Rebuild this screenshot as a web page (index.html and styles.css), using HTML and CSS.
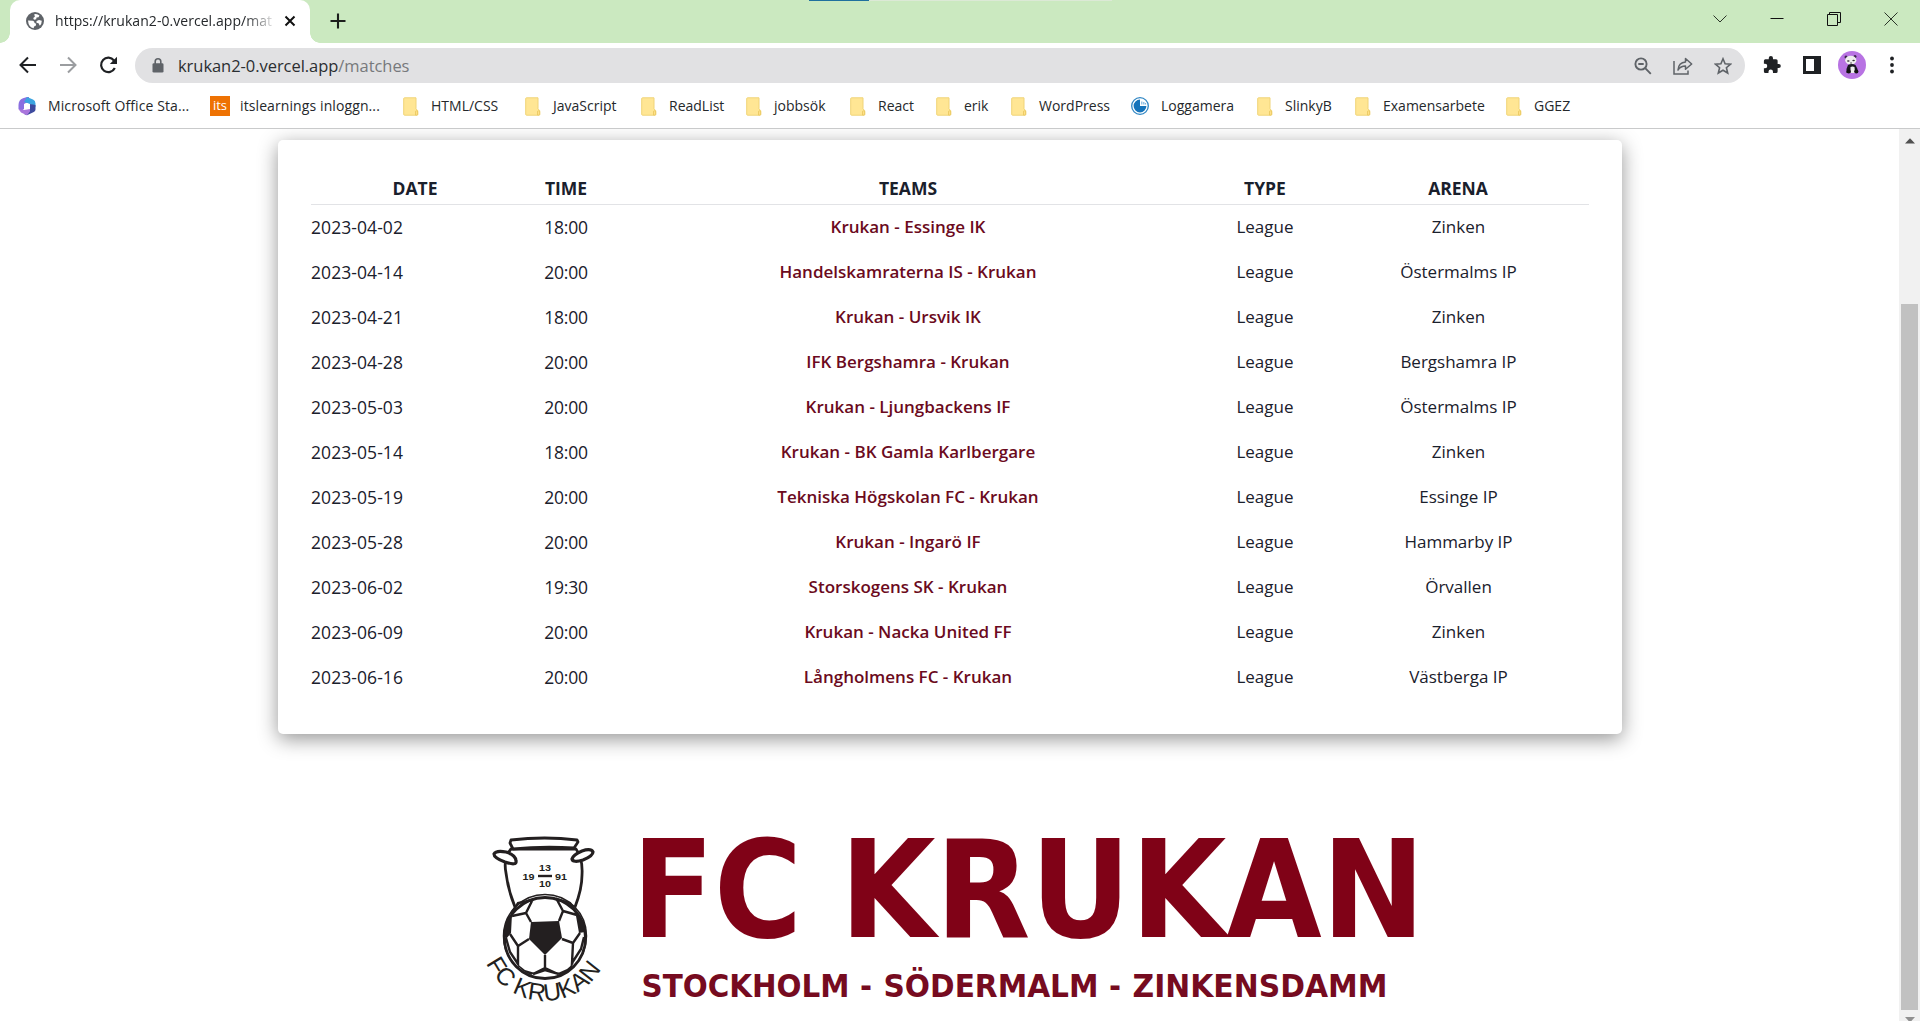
FILE: index.html
```html
<!DOCTYPE html>
<html lang="en">
<head>
<meta charset="utf-8">
<title>krukan2-0.vercel.app/matches</title>
<link rel="stylesheet" href="styles.css">
</head>
<body>
<svg width="0" height="0" class="defs">
  <symbol id="folder" viewBox="0 0 16 19"><path d="M1.500 .8h11.500v11l1.800 2v3.600q0 .8-.8.800H1.500q-.8 0-.8-.8V1.600q0-.8.800-.8z" fill="#ffe694" stroke="#f0d478"/><path d="M12.500 18v-3q0-1.300 1-1.300t1.100 1.300v2.300q0 .7-.8.700z" fill="#ffe08a" stroke="#e9c65c" stroke-width=".8"/></symbol>
</svg>
<div class="browser">
  <div class="tabstrip">
    <div class="tab">
      <svg width="18" height="18" viewBox="0 0 18 18"><circle cx="9" cy="9" r="9" fill="#5f6368"/><path d="M2 8.500l5 .3q1.800.7 1.500 2.200l1.700.8-.6 2.200-1.600.6-.3 1.700Q2.500 15.300 2 8.500zM8.200 2.200q3-.8 5.300 1.300l-1 1.800-2 .2-.3 1.700-2.200.6-.8-1.800 1.700-1.200zM10.500 9l2.500-1 2.800.7q0 3-2 5l-1.300-2.500-2-.4z" fill="#fff"/></svg>
      <span class="tab-title">https://krukan2-0.vercel.app/mat</span>
      <svg class="tab-close" width="12" height="12" viewBox="0 0 12 12"><path d="M1.500 1.500l9 9M10.500 1.500l-9 9" stroke="#111" stroke-width="2"/></svg>
    </div>
    <svg class="newtab" width="16" height="16" viewBox="0 0 16 16"><path d="M8 .5v15M.5 8h15" stroke="#1c1e1c" stroke-width="2.100"/></svg>
    <div class="loading"></div>
    <div class="window-buttons">
      <svg width="14" height="14" viewBox="0 0 14 14"><path d="M.5 3.500L7 10l6.500-6.500" fill="none" stroke="#2b3528"/></svg>
      <svg width="14" height="14" viewBox="0 0 14 14"><path d="M.5 6.500h13" stroke="#111"/></svg>
      <svg width="14" height="14" viewBox="0 0 14 14"><path d="M.5 2.500h10v11H.5zM2.500 2.500V.5h11v10h-3" fill="none" stroke="#111"/></svg>
      <svg width="14" height="14" viewBox="0 0 14 14"><path d="M.5.5l13 13M13.500.5l-13 13" stroke="#2b3528"/></svg>
    </div>
  </div>
  <div class="toolbar">
    <svg class="nav-back" width="18" height="18" viewBox="0 0 18 18"><path d="M17 9H2M9 1.500L1.500 9 9 16.500" fill="none" stroke="#1f2124" stroke-width="2"/></svg>
    <svg class="nav-fwd" width="18" height="18" viewBox="0 0 18 18"><path d="M1 9h15M9 1.500L16.500 9 9 16.500" fill="none" stroke="#9b9da0" stroke-width="2"/></svg>
    <svg class="nav-reload" width="19" height="18" viewBox="0 0 19 18"><path d="M15.800 12a7.200 7.200 0 1 1-.8-7.500" fill="none" stroke="#1f2124" stroke-width="2.200"/><path d="M18 .8v7.200h-7.200z" fill="#1f2124"/></svg>
    <div class="omnibox">
      <svg width="12" height="15" viewBox="0 0 12 15"><path d="M3.200 6V3.600a2.800 2.800 0 0 1 5.600 0V6" fill="none" stroke="#5f6368" stroke-width="1.600"/><rect x=".5" y="5.300" width="11" height="9.200" rx="1.300" fill="#5f6368"/></svg>
      <span class="url">krukan2-0.vercel.app<i>/matches</i></span>
      <svg class="zoom-icon" width="18" height="18" viewBox="0 0 18 18" fill="none" stroke="#5f6368" stroke-width="1.900"><circle cx="7" cy="7" r="5.600"/><path d="M11.200 11.200l5.600 5.600M4.300 7h5.400"/></svg>
      <svg class="share-icon" width="20" height="18" viewBox="0 0 20 18" fill="none" stroke="#5f6368" stroke-width="1.500"><path d="M1 4v13h14v-3.500"/><path d="M5 13q.5-7.500 7.500-8V1.500L18.700 7l-6.200 5.300V9q-5 0-7.500 4z" stroke-linejoin="round"/></svg>
      <svg width="18" height="18" viewBox="0 0 18 18"><path d="M9 1.800l2.100 4.900 5.400.5-4.100 3.500 1.300 5.300L9 13.200 4.300 16l1.300-5.300L1.500 7.200l5.400-.5z" fill="none" stroke="#5f6368" stroke-width="1.600"/></svg>
    </div>
    <svg class="ext" width="18" height="18" viewBox="0 0 24 24"><path d="M21 10.500h-1.500V6.200q0-2-2-2h-4.200V2.800a2.800 2.800 0 0 0-5.600 0v1.400H3.200q-2 0-2 2v4h1.500a3 3 0 0 1 0 6H1.200v4.300q0 2 2 2h4.100V21a3 3 0 0 1 6 0v1.500h4.200q2 0 2-2V16H21a2.750 2.750 0 0 0 0-5.500z" fill="#1f2124"/></svg>
    <svg class="panel" width="18" height="18" viewBox="0 0 18 18"><path d="M0 0h18v18H0zM3 3v12h8V3z" fill="#1f2124" fill-rule="evenodd"/></svg>
    <svg class="avatar" width="28" height="28" viewBox="0 0 28 28"><circle cx="14" cy="14" r="14" fill="#b873e3"/><circle cx="8" cy="6" r="1.500" fill="#39254a"/><circle cx="17" cy="5.500" r="1.500" fill="#39254a"/><ellipse cx="12.800" cy="9.200" rx="5.600" ry="4.400" fill="#eee"/><ellipse cx="10.300" cy="10" rx="1.300" ry=".8" fill="#333"/><ellipse cx="15.600" cy="9.500" rx="1.300" ry=".8" fill="#333"/><path d="M12.300 12h1.500" stroke="#333"/><path d="M10 14q4-2 7.500 0l2 4v4h-11v-4z" fill="#191820"/><path d="M12.500 16q2-1 4 0l.5 6h-4.500z" fill="#eee"/><circle cx="10.700" cy="20.500" r="2.100" fill="#111"/><circle cx="18.300" cy="20.500" r="2.100" fill="#111"/></svg>
    <svg class="more" width="4" height="18" viewBox="0 0 4 18" fill="#1f2124"><circle cx="2" cy="2.500" r="1.900"/><circle cx="2" cy="9" r="1.900"/><circle cx="2" cy="15.500" r="1.900"/></svg>
  </div>
  <div class="bookmarks">
    <div class="bm w-office"><svg width="18" height="20" viewBox="0 0 18 20"><path d="M9 1L5 2.200Q.5 4 .5 9v4l2.500 2 3-2V8l5-2.500V1z" fill="#8a6fe0"/><path d="M9 1l6 2.500q2.500 1.200 2.500 4V11L12 8 6 6z" fill="#3ca4e0"/><path d="M17.500 9v4.500q0 1.700-1.700 2.600L9 19.300 6 18l6-4V8z" fill="#3d4a9e"/><path d="M.5 13L3 16.500l6 2.800 3-3.800V13l-6 1z" fill="#a975dc"/><path d="M9 7l2.700 1.500v3.300L9 13.300l-2.700-1.500V8.500z" fill="#fff"/></svg><span>Microsoft Office Sta...</span></div>
    <div class="bm w-its"><b class="its">its</b><span>itslearnings inloggn...</span></div>
    <div class="bm w-html"><svg width="16" height="19"><use href="#folder"/></svg><span>HTML/CSS</span></div>
    <div class="bm w-js"><svg width="16" height="19"><use href="#folder"/></svg><span>JavaScript</span></div>
    <div class="bm w-read"><svg width="16" height="19"><use href="#folder"/></svg><span>ReadList</span></div>
    <div class="bm w-jobb"><svg width="16" height="19"><use href="#folder"/></svg><span>jobbsök</span></div>
    <div class="bm w-react"><svg width="16" height="19"><use href="#folder"/></svg><span>React</span></div>
    <div class="bm w-erik"><svg width="16" height="19"><use href="#folder"/></svg><span>erik</span></div>
    <div class="bm w-wp"><svg width="16" height="19"><use href="#folder"/></svg><span>WordPress</span></div>
    <div class="bm w-log"><svg width="18" height="18" viewBox="0 0 18 18"><circle cx="9" cy="9" r="8.300" fill="#fff" stroke="#3187c4" stroke-width="1.300"/><path d="M9 2.600a6.400 6.400 0 1 0 6.400 6.400H9z" fill="#1674bb"/><path d="M10.800 7.500V4.500M12.800 7.500V5M14.500 7.500V6" stroke="#7db5de" stroke-width="1.200"/></svg><span>Loggamera</span></div>
    <div class="bm w-slinky"><svg width="16" height="19"><use href="#folder"/></svg><span>SlinkyB</span></div>
    <div class="bm w-exam"><svg width="16" height="19"><use href="#folder"/></svg><span>Examensarbete</span></div>
    <div class="bm w-ggez"><svg width="16" height="19"><use href="#folder"/></svg><span>GGEZ</span></div>
  </div>
</div>
<div class="viewport">
  <main>
    <section class="card">
      <table>
        <colgroup><col class="c-date"><col class="c-time"><col class="c-teams"><col class="c-type"><col class="c-arena"></colgroup>
        <thead><tr><th>DATE</th><th>TIME</th><th>TEAMS</th><th>TYPE</th><th>ARENA</th></tr></thead>
        <tbody>
          <tr><td>2023-04-02</td><td>18:00</td><td>Krukan - Essinge IK</td><td>League</td><td>Zinken</td></tr>
          <tr><td>2023-04-14</td><td>20:00</td><td>Handelskamraterna IS - Krukan</td><td>League</td><td>Östermalms IP</td></tr>
          <tr><td>2023-04-21</td><td>18:00</td><td>Krukan - Ursvik IK</td><td>League</td><td>Zinken</td></tr>
          <tr><td>2023-04-28</td><td>20:00</td><td>IFK Bergshamra - Krukan</td><td>League</td><td>Bergshamra IP</td></tr>
          <tr><td>2023-05-03</td><td>20:00</td><td>Krukan - Ljungbackens IF</td><td>League</td><td>Östermalms IP</td></tr>
          <tr><td>2023-05-14</td><td>18:00</td><td>Krukan - BK Gamla Karlbergare</td><td>League</td><td>Zinken</td></tr>
          <tr><td>2023-05-19</td><td>20:00</td><td>Tekniska Högskolan FC - Krukan</td><td>League</td><td>Essinge IP</td></tr>
          <tr><td>2023-05-28</td><td>20:00</td><td>Krukan - Ingarö IF</td><td>League</td><td>Hammarby IP</td></tr>
          <tr><td>2023-06-02</td><td>19:30</td><td>Storskogens SK - Krukan</td><td>League</td><td>Örvallen</td></tr>
          <tr><td>2023-06-09</td><td>20:00</td><td>Krukan - Nacka United FF</td><td>League</td><td>Zinken</td></tr>
          <tr><td>2023-06-16</td><td>20:00</td><td>Långholmens FC - Krukan</td><td>League</td><td>Västberga IP</td></tr>
        </tbody>
      </table>
    </section>
    <svg class="logo" width="960" height="221" viewBox="0 -20 960 221">
      <g fill="#fff" stroke="#231f20" stroke-width="2.800" stroke-linejoin="round">
        <path d="M41 29Q33 38 36 53q2 17 9 34h60q7-18 7-32 1-17-6-26z"/>
        <path d="M41 20q34-4 66 0l1 2-4 6q-31-2-61 1l-3-6z"/>
        <path d="M24 34q2-4 12-2 10 3 10 9 1 5-11 1-11-4-11-8z" stroke-width="3.200"/>
        <path d="M123 32q-2-4-11-1-9 4-10 8 1 4 11 1 10-4 10-8z" stroke-width="3.200"/>
        <circle cx="75" cy="116" r="41.500" stroke-width="1.500"/>
        <circle cx="75" cy="118" r="40.500"/>
      </g>
      <path d="M61 102l28-1 3 17-17 17-16-16z" fill="#231f20"/>
      <path d="M35 104q2-8 7-10l-1 19-5 6q-2-8-1-15zM108 94q7 7 7 18l-6 1-3-17zM46 143l9 7 10 3-4 2q-9-3-15-12zM88 153l9-4 7-6q-4 10-14 13z" fill="#231f20"/>
      <path d="M61 102l-5-9 7-14M56 93l-14 3M89 101l4-10-7-13M93 91l14 4M59 119l-11 7-8-12M92 119l11 4 7-10M75 135v13l-12 6M75 148l13 6M48 126v18l-8-12-4-14M103 123l-1 20 9-14 3-12M41 94l7-11 15-3M86 79l14 4 8 12M63 154l12-4 14 4" fill="none" stroke="#231f20" stroke-width="2.400"/>
      <g class="years"><text x="69" y="51" textLength="12" lengthAdjust="spacingAndGlyphs">13</text><text x="52.500" y="59.500" textLength="12" lengthAdjust="spacingAndGlyphs">19</text><text x="85" y="59.500" textLength="12" lengthAdjust="spacingAndGlyphs">91</text><text x="69" y="66.500" textLength="12" lengthAdjust="spacingAndGlyphs">10</text></g>
      <path d="M68 56h14" stroke="#231f20" stroke-width="2.400"/>
      <path id="arc" d="M16 143A65 65 0 0 0 135 141" fill="none"/>
      <text class="arc-text"><textPath href="#arc">FC KRUKAN</textPath></text>
      <g class="club"><text x="162" y="117" textLength="170" lengthAdjust="spacingAndGlyphs">FC</text><text x="370" y="117" textLength="585" lengthAdjust="spacingAndGlyphs">KRUKAN</text></g>
      <g class="place"><text x="171.500" y="177" textLength="208" lengthAdjust="spacingAndGlyphs">STOCKHOLM</text><text x="390" y="177">-</text><text x="413.500" y="177" textLength="215" lengthAdjust="spacingAndGlyphs">SÖDERMALM</text><text x="639" y="177">-</text><text x="662.500" y="177" textLength="255" lengthAdjust="spacingAndGlyphs">ZINKENSDAMM</text></g>
    </svg>
  </main>
  <div class="scrollbar">
    <svg width="10" height="6" viewBox="0 0 10 6"><path d="M0 5.500L5 .3l5 5.200z" fill="#505050"/></svg>
    <div class="thumb"></div>
    <svg class="down" width="10" height="6" viewBox="0 0 10 6"><path d="M0 0h10L5 5.500z" fill="#909090"/></svg>
  </div>
</div>
</body>
</html>
```
FILE: styles.css
```css
* { box-sizing: border-box; }
body { margin: 0; width: 1920px; height: 1021px; overflow: hidden; display: flex; flex-direction: column; background: #fff; font-family: "Open Sans", "Noto Sans", sans-serif; color: #1a202c; }
svg { display: block; flex: none; }
.defs { position: absolute; }
.browser { height: 129px; flex: none; border-bottom: 1px solid #c9cacb; font-size: 14px; color: #25282b; }
.tabstrip { position: relative; height: 43px; display: flex; background: #cbe9c0; padding-left: 10px; }
.tab { position: relative; width: 300px; height: 43px; display: flex; align-items: center; padding: 0 14px 2px 16px; background: #fff; border-radius: 10px 10px 0 0; }
.tab::before, .tab::after { content: ""; position: absolute; bottom: 0; width: 10px; height: 10px; }
.tab::before { left: -10px; background: radial-gradient(circle at 0 0, transparent 9.500px, #fff 10px); }
.tab::after { right: -10px; background: radial-gradient(circle at 100% 0, transparent 9.500px, #fff 10px); }
.tab-title { width: 219px; margin-left: 11px; white-space: nowrap; font-size: 14px; letter-spacing: .05px; -webkit-mask-image: linear-gradient(90deg, #000 190px, transparent 222px); }
.tab-close { margin-left: auto; }
.newtab { margin: 13px 0 0 20px; }
.loading { position: absolute; left: 809px; top: 0; width: 303px; height: 1px; background: linear-gradient(90deg, #1f709e 60px, #dce9d6 60px); }
.window-buttons { margin: 12px 22px 0 auto; display: flex; gap: 43px; }
.toolbar { height: 44px; display: flex; align-items: center; padding: 0 26px 0 19px; }
.nav-fwd { margin-left: 22px; }
.nav-reload { margin-left: 22px; }
.omnibox { margin-left: 17px; width: 1610px; height: 35px; margin-top: 1px; display: flex; align-items: center; border-radius: 18px; background: #e1e1e3; padding: 0 13px 0 17px; }
.url { margin-left: 14px; font-size: 16.500px; color: #2b2e31; letter-spacing: -.05px; margin-right: auto; }
.url i { font-style: normal; color: #77797c; }
.zoom-icon { margin-right: 21px; }
.share-icon { margin-right: 21px; }
.ext { margin-left: 18px; }
.panel { margin-left: 22px; }
.avatar { margin-left: 17px; }
.more { margin-left: auto; }
.bookmarks { height: 38px; display: flex; align-items: center; padding-left: 18px; }
.bm { height: 33px; display: flex; align-items: center; white-space: nowrap; flex: none; }
.bm span { margin-left: 12px; padding-bottom: 2px; font-size: 14px; }
.w-office span, .w-its span { letter-spacing: .1px; }
.its { width: 20px; height: 20px; background: #ee7203; color: #fff; font-size: 13px; line-height: 18px; text-align: center; font-weight: 400; }
.bm.w-its span { margin-left: 10px; }
.bm svg[width="16"] + span { margin-left: 12px; }
.w-office { width: 192px; }
.w-its { width: 193px; }
.w-html { width: 122px; }
.w-js { width: 116px; }
.w-read { width: 105px; }
.w-jobb { width: 104px; }
.w-react { width: 86px; }
.w-erik { width: 75px; }
.w-wp { width: 120px; }
.w-log { width: 126px; }
.w-slinky { width: 98px; }
.w-exam { width: 151px; }
.viewport { flex: 1; display: flex; min-height: 0; overflow: hidden; }
main { width: 1899px; padding: 11px 0 0 278px; }
.card { width: 1344px; height: 594px; border-radius: 5px; background: #fff; box-shadow: 0 5px 20px rgba(0, 0, 0, .42); padding: 30px 33px; }
table { width: 1278px; table-layout: fixed; border-collapse: collapse; font-size: 17.500px; }
.c-date { width: 208px; }
.c-time { width: 94px; }
.c-teams { width: 590px; }
.c-type { width: 124px; }
.c-arena { width: 262px; }
th { height: 34px; padding: 3px 0 0; line-height: 30px; border-bottom: 1px solid #e2e3e6; font-size: 17.500px; font-weight: 700; }
td { height: 45px; padding: 0; line-height: 44px; text-align: center; }
td:first-child { text-align: left; letter-spacing: .07px; }
td:nth-child(2) { letter-spacing: -.25px; }
td:nth-child(3) { color: #6b0a20; font-weight: 600; font-size: 17px; }
td:nth-child(4) { font-size: 17px; }
td:nth-child(5) { font-size: 17px; padding-left: 1px; }
.logo { margin: 66px 0 0 192px; }
.years { font: 700 9.500px "Liberation Sans", sans-serif; fill: #231f20; }
.arc-text { font: 400 24.500px "Liberation Sans", sans-serif; fill: #231f20; }
.club { font: 700 135.500px "DejaVu Sans Condensed", "DejaVu Sans", sans-serif; fill: #800217; }
.place { font: 700 32.200px "DejaVu Sans Condensed", "DejaVu Sans", sans-serif; fill: #760b20; }
.scrollbar { width: 21px; background: #f1f1f1; display: flex; flex-direction: column; align-items: center; padding-top: 9px; }
.thumb { width: 17px; height: 706px; margin-top: 160px; flex: none; background: #c1c1c1; }
.down { margin-top: 7px; }
```
